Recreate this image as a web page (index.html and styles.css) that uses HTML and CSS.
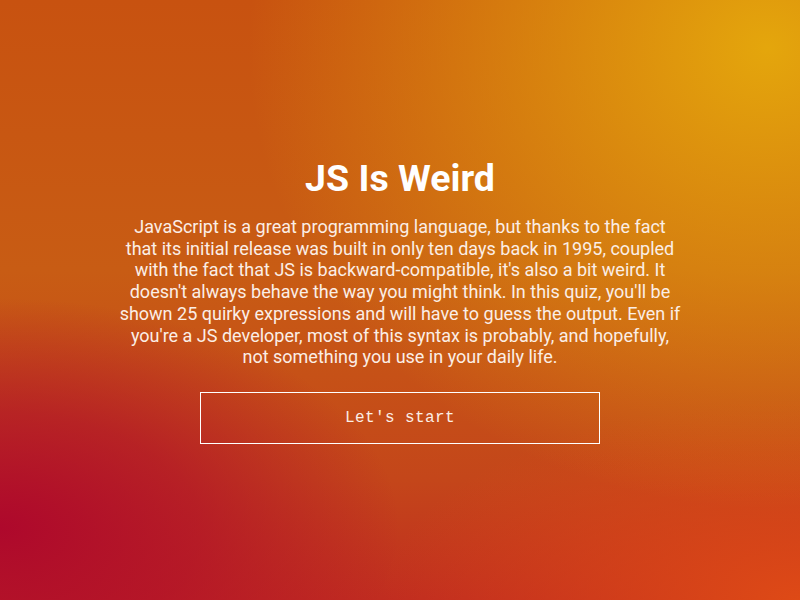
FILE: index.html
```html
<!DOCTYPE html>
<html lang="en">
<head>
<meta charset="utf-8">
<title>JS Is Weird</title>
<link rel="stylesheet" href="styles.css">
</head>
<body>
<main class="intro">
  <h1 class="title">JS Is Weird</h1>
  <p class="lead">JavaScript is a great programming language, but thanks to the fact that its initial release was built in only ten days back in 1995, coupled with the fact that JS is backward-compatible, it's also a bit weird. It doesn't always behave the way you might think. In this quiz, you'll be shown 25 quirky expressions and will have to guess the output. Even if you're a JS developer, most of this syntax is probably, and hopefully, not something you use in your daily life.</p>
  <button class="start" type="button">Let's start</button>
</main>
</body>
</html>
```
FILE: styles.css
```css
html, body {
  margin: 0;
  height: 100%;
}
body {
  font-family: Roboto, "Liberation Sans", sans-serif;
  color: #fff;
  background:
    radial-gradient(ellipse 520px 460px at 96% 8%, rgba(228,166,12,1) 0%, rgba(228,166,12,0.55) 45%, rgba(228,166,12,0) 100%),
    radial-gradient(ellipse 400px 230px at 0% 88%, rgba(174,8,44,1) 0%, rgba(174,8,44,0.6) 50%, rgba(174,8,44,0) 100%),
    radial-gradient(ellipse 420px 200px at 100% 100%, rgba(222,74,22,1) 0%, rgba(222,74,22,0) 100%),
    linear-gradient(180deg, #c85210 0%, #c85c14 45%, #c4461a 80%, #c02c20 100%);
  background-color: #c85a14;
}
.intro {
  height: 100%;
  display: flex;
  flex-direction: column;
  align-items: center;
  justify-content: center;
  text-align: center;
}
.title {
  margin: 0 0 16px;
  font-size: 37.5px;
  font-weight: 700;
  line-height: 44px;
}
.lead {
  margin: 0 0 24px;
  width: 566px;
  font-size: 18px;
  line-height: 21.8px;
  color: #fbeee6;
}
.start {
  width: 400px;
  height: 52px;
  background: transparent;
  border: 1px solid #fff;
  color: #fbeee6;
  font-family: "Liberation Mono", "DejaVu Sans Mono", monospace;
  font-size: 16px;
  letter-spacing: 0.4px;
  cursor: pointer;
}
```
